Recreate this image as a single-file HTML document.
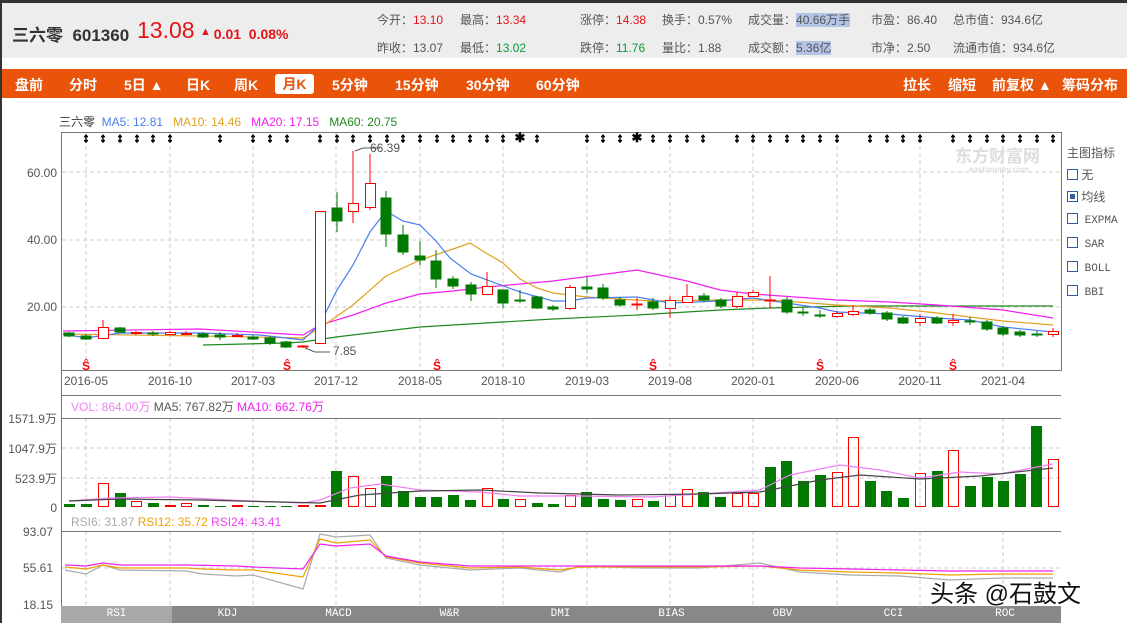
<!DOCTYPE html><html><head><meta charset="utf-8"><style>
*{margin:0;padding:0;box-sizing:border-box}
body{width:1127px;height:623px;overflow:hidden;background:#fff;font-family:"Liberation Sans","Noto Sans CJK SC",sans-serif;position:relative}
.a{position:absolute;white-space:nowrap}
#top{left:0;top:0;width:1127px;height:3px;background:#333}
#lb{left:0;top:0;width:2px;height:623px;background:#333}
#hd{left:2px;top:3px;width:1125px;height:55px;background:#ededed}
#nav{left:0;top:69px;width:1127px;height:29px;background:#e9540a;color:#fff;font-size:14px;font-weight:bold}
#nav span{position:absolute;top:6px}
.s{font-size:12px;color:#555}
svg text{font-family:"Liberation Sans","Noto Sans CJK SC",sans-serif}
.tab{position:absolute;top:606px;height:17px;width:111px;background:#888;color:#fff;font:11px "Liberation Mono",monospace;text-align:center;line-height:17px}
</style></head><body>
<div class="a" id="hd"></div><div class="a" id="top"></div>
<div class="a" style="left:12px;top:21px;font-size:17px;font-weight:bold;color:#333">三六零&nbsp; 601360</div>
<div class="a" style="left:137px;top:17px;font-size:23px;color:#e4141b">13.08</div>
<div class="a" style="left:200px;top:26px;font-size:11px;color:#e4141b">▲</div>
<div class="a" style="left:206px;top:26px;font-size:14px;font-weight:bold;color:#e4141b">&nbsp;&nbsp;0.01&nbsp; 0.08%</div>
<div class="a s" style="left:377px;top:11px">今开：<span style="color:#e4141b">13.10</span></div>
<div class="a s" style="left:460px;top:11px">最高：<span style="color:#e4141b">13.34</span></div>
<div class="a s" style="left:580px;top:11px">涨停：<span style="color:#e4141b">14.38</span></div>
<div class="a s" style="left:662px;top:11px">换手：0.57%</div>
<div class="a s" style="left:748px;top:11px">成交量：<span style="background:#b3c4e6">40.66万手</span></div>
<div class="a s" style="left:871px;top:11px">市盈：86.40</div>
<div class="a s" style="left:953px;top:11px">总市值：934.6亿</div>
<div class="a s" style="left:377px;top:39px">昨收：13.07</div>
<div class="a s" style="left:460px;top:39px">最低：<span style="color:#0a9a3a">13.02</span></div>
<div class="a s" style="left:580px;top:39px">跌停：<span style="color:#0a9a3a">11.76</span></div>
<div class="a s" style="left:662px;top:39px">量比：1.88</div>
<div class="a s" style="left:748px;top:39px">成交额：<span style="background:#b3c4e6">5.36亿</span></div>
<div class="a s" style="left:871px;top:39px">市净：2.50</div>
<div class="a s" style="left:953px;top:39px">流通市值：934.6亿</div>
<div class="a" id="nav">
<span style="left:15px">盘前</span><span style="left:69px">分时</span><span style="left:124px">5日 ▲</span><span style="left:186px">日K</span><span style="left:234px">周K</span>
<span style="left:275px;top:5px;width:39px;height:20px;background:#fff;border-radius:3px;color:#e9540a;text-align:center;line-height:20px">月K</span>
<span style="left:332px">5分钟</span><span style="left:395px">15分钟</span><span style="left:466px">30分钟</span><span style="left:536px">60分钟</span>
<span style="left:903px">拉长</span><span style="left:948px">缩短</span><span style="left:992px">前复权 ▲</span><span style="left:1062px">筹码分布</span>
</div>
<div class="a" style="left:59px;top:113px;font-size:12px;color:#333">三六零&nbsp; <span style="color:#4a7ef0">MA5: 12.81</span>&nbsp;&nbsp; <span style="color:#e0a020">MA10: 14.46</span>&nbsp;&nbsp; <span style="color:#f020f0">MA20: 17.15</span>&nbsp;&nbsp; <span style="color:#228822">MA60: 20.75</span></div>
<div class="a" style="left:1067px;top:142px;font-size:12px;color:#555;line-height:22px">主图指标<br>
<span style="display:inline-block;width:11px;height:11px;border:1px solid #335e99;vertical-align:-1px"></span> 无<br>
<span style="display:inline-block;width:11px;height:11px;border:1px solid #335e99;vertical-align:-1px;padding:2px"><span style="display:block;width:5px;height:5px;background:#335e99"></span></span> 均线<br>
<span style="font-family:'Liberation Mono';font-size:11px"><span style="display:inline-block;width:11px;height:11px;border:1px solid #335e99;vertical-align:-1px"></span> EXPMA<br>
<span style="display:inline-block;width:11px;height:11px;border:1px solid #335e99;vertical-align:-1px"></span> SAR<br>
<span style="display:inline-block;width:11px;height:11px;border:1px solid #335e99;vertical-align:-1px"></span> BOLL<br>
<span style="display:inline-block;width:11px;height:11px;border:1px solid #335e99;vertical-align:-1px"></span> BBI</span></div>
<svg class="a" style="left:0;top:0" width="1127" height="623">
<g stroke="#ccc" stroke-dasharray="4,3" stroke-width="1">
<path d="M62 172H1061M62 240H1061M62 307H1061M62 448H1061M62 478H1061M62 568H1061"/>
<path d="M86 132V370M170 132V370M253 132V370M336 132V370M420 132V370M503 132V370M587 132V370M670 132V370M753 132V370M837 132V370M920 132V370M1003 132V370"/>
<path d="M86 418V507M170 418V507M253 418V507M336 418V507M420 418V507M503 418V507M587 418V507M670 418V507M753 418V507M837 418V507M920 418V507M1003 418V507"/>
<path d="M86 531V605M170 531V605M253 531V605M336 531V605M420 531V605M503 531V605M587 531V605M670 531V605M753 531V605M837 531V605M920 531V605M1003 531V605"/>
</g>
<g fill="none" stroke="#777"><rect x="61.5" y="132.5" width="1000" height="238"/><path d="M61.5 370V606M61 395.5H1061M61.5 418.5H1061M61 531.5H1061M61.5 397V507"/></g>
<text x="955" y="162" font-size="17" font-weight="bold" fill="#ddd">东方财富网</text>
<text x="969" y="172" font-size="8" font-weight="bold" fill="#ddd">eastmoney.com</text>
<g font-size="12" fill="#555" text-anchor="end"><text x="57" y="177">60.00</text><text x="57" y="244">40.00</text><text x="57" y="311">20.00</text>
<text x="57" y="423">1571.9万</text><text x="57" y="453">1047.9万</text><text x="57" y="483">523.9万</text><text x="57" y="512">0</text>
<text x="53" y="536">93.07</text><text x="53" y="572">55.61</text><text x="53" y="609">18.15</text></g>
<g font-size="12" fill="#555" text-anchor="middle"><text x="86" y="385">2016-05</text><text x="170" y="385">2016-10</text><text x="253" y="385">2017-03</text><text x="336" y="385">2017-12</text><text x="420" y="385">2018-05</text><text x="503" y="385">2018-10</text><text x="587" y="385">2019-03</text><text x="670" y="385">2019-08</text><text x="753" y="385">2020-01</text><text x="837" y="385">2020-06</text><text x="920" y="385">2020-11</text><text x="1003" y="385">2021-04</text></g>
<g font-size="13" font-weight="bold" fill="#000" stroke="#000" stroke-width="0.9" text-anchor="middle">
<text x="86" y="142">↕</text><text x="103" y="142">↕</text><text x="120" y="142">↕</text><text x="137" y="142">↕</text><text x="153" y="142">↕</text><text x="170" y="142">↕</text><text x="220" y="142">↕</text><text x="253" y="142">↕</text><text x="270" y="142">↕</text><text x="287" y="142">↕</text><text x="320" y="142">↕</text><text x="337" y="142">↕</text><text x="353" y="142">↕</text><text x="370" y="142">↕</text><text x="387" y="142">↕</text><text x="403" y="142">↕</text><text x="420" y="142">↕</text><text x="437" y="142">↕</text><text x="453" y="142">↕</text><text x="470" y="142">↕</text><text x="487" y="142">↕</text><text x="503" y="142">↕</text><text x="520" y="142" stroke-width="0">✱</text><text x="537" y="142">↕</text><text x="587" y="142">↕</text><text x="603" y="142">↕</text><text x="620" y="142">↕</text><text x="637" y="142" stroke-width="0">✱</text><text x="653" y="142">↕</text><text x="670" y="142">↕</text><text x="687" y="142">↕</text><text x="703" y="142">↕</text><text x="737" y="142">↕</text><text x="753" y="142">↕</text><text x="770" y="142">↕</text><text x="787" y="142">↕</text><text x="803" y="142">↕</text><text x="820" y="142">↕</text><text x="837" y="142">↕</text><text x="870" y="142">↕</text><text x="887" y="142">↕</text><text x="903" y="142">↕</text><text x="920" y="142">↕</text><text x="953" y="142">↕</text><text x="970" y="142">↕</text><text x="987" y="142">↕</text><text x="1003" y="142">↕</text><text x="1020" y="142">↕</text><text x="1037" y="142">↕</text><text x="1053" y="142">↕</text></g>
<g font-size="12" font-weight="bold" fill="#f00" text-anchor="middle"><text x="86" y="370">Ŝ</text><text x="287" y="370">Ŝ</text><text x="437" y="370">Ŝ</text><text x="653" y="370">Ŝ</text><text x="820" y="370">Ŝ</text><text x="953" y="370">Ŝ</text></g>
<g fill="none" stroke-width="1.2">
<polyline stroke="#228822" points="203,345 286,343 303,342 336,337 386,331 420,327 453,325 553,319 637,315 720,310 770,308 850,306 1053,306"/>
<polyline stroke="#f020f0" points="63,331 200,329 303,335 320,325 353,315 386,303 420,294 453,291 487,287 553,281 637,270 687,281 720,290 753,294 837,300 890,302 937,305 1003,310 1053,318"/>
<polyline stroke="#e0a020" points="63,334 200,336 303,338 320,328 353,305 386,276 420,260 453,249 470,243 486,253 503,263 520,279 537,288 553,293 587,297 653,301 720,300 770,300 837,305 890,308 937,313 1003,321 1053,325"/>
<polyline stroke="#4a7ef0" points="63,334 86,338 120,333 200,333 260,335 303,340 320,324 337,290 353,265 370,232 386,211 403,221 420,225 436,241 450,258 471,274 520,292 553,301 570,301 587,298 637,297 670,303 720,301 753,298 820,308 837,312 890,314 937,318 970,320 1003,327 1053,332"/>
</g>
<g stroke="#007a00" fill="#007a00">
<path d="M69 332V337M86 334V340M120 327V333M153 331V336M203 332V338M220 332V340M253 335V340M270 336V345M286 341V348M337 192V232M386 191V247M403 225V255M420 241V265M436 250V288M453 276V289M471 282V301M503 290V308M520 290V303M537 296V309M553 305V311M587 277V293M603 284V300M620 297V307M653 298V310M704 293V302M721 298V308M787 297V314M803 307V316M820 310V318M870 308V315M887 311V321M903 316V324M937 316V324M970 317V325M987 320V331M1003 326V336M1020 330V337M1037 331V337"/>
<rect x="64" y="333" width="10" height="3"/><rect x="81" y="336" width="10" height="3"/><rect x="115" y="328" width="10" height="4"/><rect x="148" y="333" width="10" height="1"/><rect x="198" y="334" width="10" height="3"/><rect x="215" y="335" width="10" height="2"/><rect x="248" y="337" width="10" height="2"/><rect x="265" y="338" width="10" height="5"/><rect x="281" y="342" width="10" height="5"/><rect x="332" y="208" width="10" height="13"/><rect x="381" y="198" width="10" height="36"/><rect x="398" y="235" width="10" height="17"/><rect x="415" y="256" width="10" height="4"/><rect x="431" y="261" width="10" height="18"/><rect x="448" y="279" width="10" height="7"/><rect x="466" y="285" width="10" height="9"/><rect x="498" y="290" width="10" height="13"/><rect x="515" y="300" width="10" height="1"/><rect x="532" y="297" width="10" height="11"/><rect x="548" y="307" width="10" height="2"/><rect x="582" y="287" width="10" height="2"/><rect x="598" y="288" width="10" height="10"/><rect x="615" y="300" width="10" height="5"/><rect x="648" y="302" width="10" height="6"/><rect x="699" y="296" width="10" height="4"/><rect x="716" y="300" width="10" height="6"/><rect x="782" y="300" width="10" height="12"/><rect x="798" y="312" width="10" height="1"/><rect x="815" y="315" width="10" height="1"/><rect x="865" y="310" width="10" height="3"/><rect x="882" y="313" width="10" height="6"/><rect x="898" y="318" width="10" height="5"/><rect x="932" y="318" width="10" height="5"/><rect x="965" y="321" width="10" height="1"/><rect x="982" y="322" width="10" height="7"/><rect x="998" y="328" width="10" height="6"/><rect x="1015" y="332" width="10" height="3"/><rect x="1032" y="334" width="10" height="1"/>
</g>
<g stroke="#f00" fill="#fff">
<path d="M103 320V338M136 331V335M170 331V335M186 331V335M237 333V337M303 345V348M353 151V223M370 154V210M487 272V294M570 285V310M637 298V310M670 296V318M687 284V302M737 292V308M753 290V296M770 276V308M837 311V318M853 305V316M920 314V326M953 314V326M1053 328V337"/>
<rect x="98.5" y="327.5" width="10" height="11"/><rect x="131.5" y="332.5" width="10" height="1"/><rect x="165.5" y="332.5" width="10" height="2"/><rect x="181.5" y="333.5" width="10" height="1"/><rect x="232.5" y="335.5" width="10" height="1"/><rect x="298" y="346" width="10" height="1" fill="#f00"/><rect x="315.5" y="211.5" width="10" height="132"/><rect x="348.5" y="203.5" width="10" height="8"/><rect x="365.5" y="183.5" width="10" height="24"/><rect x="482.5" y="286.5" width="10" height="8"/><rect x="565.5" y="287.5" width="10" height="21"/><rect x="632" y="304" width="10" height="1" fill="#f00"/><rect x="665.5" y="300.5" width="10" height="8"/><rect x="682.5" y="296.5" width="10" height="6"/><rect x="732.5" y="296.5" width="10" height="10"/><rect x="748.5" y="292.5" width="10" height="4"/><rect x="765" y="300" width="10" height="1" fill="#f00"/><rect x="832.5" y="313.5" width="10" height="3"/><rect x="848.5" y="311.5" width="10" height="3"/><rect x="915.5" y="318.5" width="10" height="4"/><rect x="948.5" y="320.5" width="10" height="2"/><rect x="1048.5" y="331.5" width="10" height="3"/>
</g>
<g stroke="#555" fill="none"><path d="M355 151L363 148H380M305 348L315 352H330"/></g>
<text x="370" y="152" font-size="12" fill="#555">66.39</text><text x="333" y="355" font-size="12" fill="#555">7.85</text>
<text x="71" y="411" font-size="12" fill="#f080f0">VOL: 864.00万 <tspan fill="#555">MA5: 767.82万</tspan> <tspan fill="#f020f0">MA10: 662.76万</tspan></text>
<g fill="#007a00">
<rect x="64" y="504" width="11" height="3"/><rect x="81" y="504" width="11" height="3"/><rect x="115" y="493" width="11" height="14"/><rect x="148" y="503" width="11" height="4"/><rect x="198" y="505" width="11" height="2"/><rect x="215" y="506" width="11" height="1"/><rect x="248" y="506" width="11" height="1"/><rect x="265" y="506" width="11" height="1"/><rect x="281" y="506" width="11" height="1"/><rect x="331" y="471" width="11" height="36"/><rect x="381" y="476" width="11" height="31"/><rect x="398" y="491" width="11" height="16"/><rect x="415" y="497" width="11" height="10"/><rect x="431" y="497" width="11" height="10"/><rect x="448" y="495" width="11" height="12"/><rect x="465" y="500" width="11" height="7"/><rect x="498" y="499" width="11" height="8"/><rect x="532" y="503" width="11" height="4"/><rect x="548" y="504" width="11" height="3"/><rect x="581" y="492" width="11" height="15"/><rect x="598" y="499" width="11" height="8"/><rect x="615" y="500" width="11" height="7"/><rect x="648" y="501" width="11" height="6"/><rect x="698" y="492" width="11" height="15"/><rect x="715" y="497" width="11" height="10"/><rect x="765" y="467" width="11" height="40"/><rect x="781" y="461" width="11" height="46"/><rect x="798" y="481" width="11" height="26"/><rect x="815" y="475" width="11" height="32"/><rect x="865" y="481" width="11" height="26"/><rect x="881" y="491" width="11" height="16"/><rect x="898" y="498" width="11" height="9"/><rect x="932" y="471" width="11" height="36"/><rect x="965" y="486" width="11" height="21"/><rect x="982" y="477" width="11" height="30"/><rect x="998" y="481" width="11" height="26"/><rect x="1015" y="474" width="11" height="33"/><rect x="1031" y="426" width="11" height="81"/></g>
<g fill="none" stroke="#f00"><rect x="98.5" y="483.5" width="10" height="23"/><rect x="131.5" y="501.5" width="10" height="5"/><rect x="165.5" y="505.5" width="10" height="1"/><rect x="181.5" y="503.5" width="10" height="3"/><rect x="232.5" y="505.5" width="10" height="1"/><rect x="298.5" y="505.5" width="10" height="1"/><rect x="315.5" y="505.5" width="10" height="1"/><rect x="348.5" y="476.5" width="10" height="30"/><rect x="365.5" y="488.5" width="10" height="18"/><rect x="482.5" y="488.5" width="10" height="18"/><rect x="515.5" y="499.5" width="10" height="7"/><rect x="565.5" y="495.5" width="10" height="11"/><rect x="632.5" y="499.5" width="10" height="7"/><rect x="665.5" y="494.5" width="10" height="12"/><rect x="682.5" y="489.5" width="10" height="17"/><rect x="732.5" y="493.5" width="10" height="13"/><rect x="748.5" y="493.5" width="10" height="13"/><rect x="832.5" y="472.5" width="10" height="34"/><rect x="848.5" y="437.5" width="10" height="69"/><rect x="915.5" y="473.5" width="10" height="33"/><rect x="948.5" y="450.5" width="10" height="56"/><rect x="1048.5" y="459.5" width="10" height="47"/></g>
<g fill="none" stroke-width="1.2"><polyline stroke="#f080f0" points="69,501 110,498 170,497 250,501 303,503 320,500 350,488 380,484 420,490 480,492 520,496 580,496 650,497 700,494 760,490 790,475 840,465 880,470 920,478 960,472 1000,474 1053,464"/>
<polyline stroke="#444" points="69,501 120,499 200,500 280,502 320,503 360,495 420,491 480,490 540,493 620,495 700,494 760,492 820,480 860,475 920,479 980,476 1053,468"/></g>
<text x="71" y="526" font-size="12" fill="#aaa">RSI6: 31.87 <tspan fill="#f0a000">RSI12: 35.72</tspan> <tspan fill="#f040f0">RSI24: 43.41</tspan></text>
<g fill="none" stroke-width="1.2">
<polyline stroke="#aaa" points="65,570 86,574 103,565 120,570 186,571 203,574 237,576 253,575 303,589 320,534 336,537 370,535 386,558 420,565 470,570 520,568 560,572 580,566 640,568 700,568 760,563 800,572 850,575 900,576 950,580 1000,578 1053,578"/>
<polyline stroke="#f0a000" points="65,567 86,569 103,565 120,568 186,568 203,569 237,570 253,570 303,577 320,539 336,543 370,540 386,557 420,563 470,568 520,567 560,570 580,567 640,567 700,567 760,566 800,570 850,572 900,573 950,575 1000,574 1053,574"/>
<polyline stroke="#f020f0" points="65,565 86,566 103,563 120,565 186,565 237,566 253,567 303,569 320,544 336,546 370,544 386,556 420,562 470,566 520,566 580,566 640,566 700,566 760,566 800,568 850,569 900,570 950,571 1000,571 1053,571"/></g>
</svg>
<div class="tab" style="left:61px;background:#a8a8a8">RSI</div><div class="tab" style="left:172px">KDJ</div><div class="tab" style="left:283px">MACD</div><div class="tab" style="left:394px">W&amp;R</div><div class="tab" style="left:505px">DMI</div><div class="tab" style="left:616px">BIAS</div><div class="tab" style="left:727px">OBV</div><div class="tab" style="left:838px">CCI</div><div class="tab" style="left:949px;width:112px">ROC</div>
<div class="a" id="lb"></div>
<div class="a" style="left:930px;top:574px;font-size:24px;color:#111;text-shadow:0 0 3px #fff,0 0 2px #fff">头条 @石鼓文</div>
</body></html>
